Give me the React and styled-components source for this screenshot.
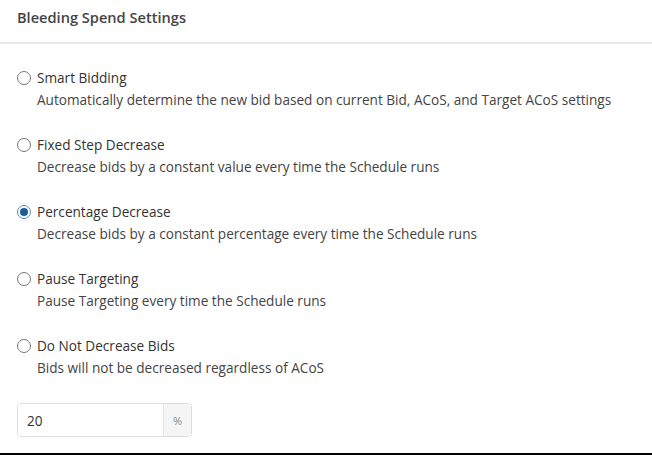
import { useState } from 'react';
import styled, { createGlobalStyle } from 'styled-components';

const options = [
  {
    id: 'smart',
    label: 'Smart Bidding',
    text: 'Automatically determine the new bid based on current Bid, ACoS, and Target ACoS settings',
  },
  {
    id: 'fixed',
    label: 'Fixed Step Decrease',
    text: 'Decrease bids by a constant value every time the Schedule runs',
  },
  {
    id: 'percentage',
    label: 'Percentage Decrease',
    text: 'Decrease bids by a constant percentage every time the Schedule runs',
  },
  {
    id: 'pause',
    label: 'Pause Targeting',
    text: 'Pause Targeting every time the Schedule runs',
  },
  {
    id: 'none',
    label: 'Do Not Decrease Bids',
    text: 'Bids will not be decreased regardless of ACoS',
  },
];

const App = () => {
  const [selected, setSelected] = useState('percentage');
  const [value, setValue] = useState('20');

  return (
    <>
      <GlobalStyle />
      <Panel>
        <Header>Bleeding Spend Settings</Header>
        <Body>
          <OptionList>
            {options.map((opt) => (
              <Option key={opt.id}>
                <LabelRow>
                  <Radio
                    type="radio"
                    name="bleeding"
                    checked={selected === opt.id}
                    onChange={() => setSelected(opt.id)}
                  />
                  {opt.label}
                </LabelRow>
                <Description>{opt.text}</Description>
              </Option>
            ))}
          </OptionList>
          <InputGroup>
            <Field value={value} onChange={(e) => setValue(e.target.value)} />
            <Addon>%</Addon>
          </InputGroup>
        </Body>
      </Panel>
    </>
  );
};

const GlobalStyle = createGlobalStyle`
  body {
    margin: 0;
    background: #fff;
    font-family: "Open Sans", "Noto Sans", sans-serif;
  }
`;

const Panel = styled.section`
  width: 652px;
  height: 455px;
  box-sizing: border-box;
  background: #fff;
  border-bottom: 2px solid #000;
`;

const Header = styled.div`
  height: 44px;
  box-sizing: border-box;
  padding: 7px 17px 0;
  font-size: 14.6px;
  line-height: 20px;
  font-weight: 600;
  color: #444;
  border-bottom: 2px solid #e8e8e8;
`;

const Body = styled.div`
  padding: 23px 17px 0;
`;

const OptionList = styled.div`
  display: flex;
  flex-direction: column;
  gap: 23px;
`;

const Option = styled.div`
  display: flex;
  flex-direction: column;
`;

const LabelRow = styled.label`
  display: flex;
  align-items: center;
  gap: 6px;
  font-size: 13.6px;
  line-height: 22px;
  color: #333;
  cursor: pointer;
`;

const Radio = styled.input`
  appearance: none;
  margin: 0;
  width: 14px;
  height: 14px;
  border: 1px solid #767676;
  border-radius: 50%;
  box-sizing: border-box;
  display: grid;
  place-items: center;
  background: #fff;
  &::before {
    content: '';
    width: 8px;
    height: 8px;
    border-radius: 50%;
    background: #1d5c9b;
    transform: scale(0);
  }
  &:checked {
    border-color: #5d87b2;
  }
  &:checked::before {
    transform: scale(1);
  }
`;

const Description = styled.div`
  padding-left: 20px;
  font-size: 13.6px;
  line-height: 22px;
  color: #444;
`;

const InputGroup = styled.div`
  display: flex;
  width: 175px;
  height: 34px;
  margin-top: 24px;
  box-sizing: border-box;
  border: 1px solid #dedede;
  border-radius: 4px;
  overflow: hidden;
`;

const Field = styled.input`
  flex: 1;
  min-width: 0;
  border: none;
  outline: none;
  padding: 0 9px;
  font-family: inherit;
  font-size: 13.6px;
  color: #333;
`;

const Addon = styled.span`
  width: 27px;
  display: flex;
  align-items: center;
  justify-content: center;
  background: #f5f5f5;
  border-left: 1px solid #e4e4e4;
  font-size: 11px;
  color: #888;
`;

export default App;
